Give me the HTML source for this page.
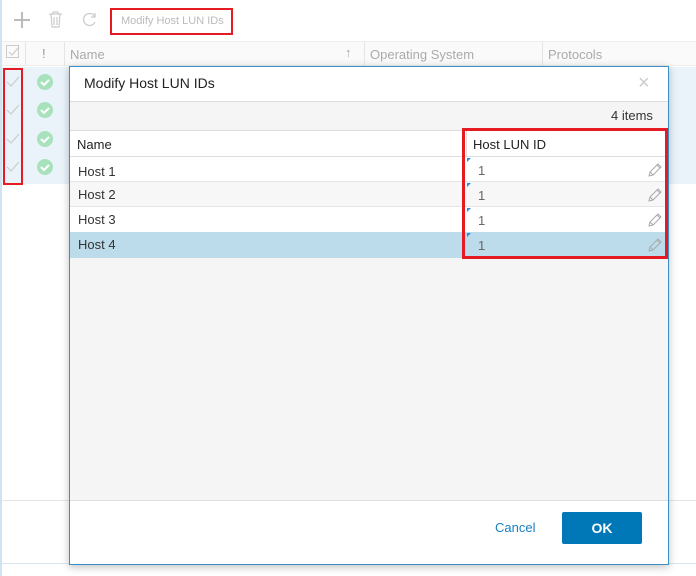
<!DOCTYPE html>
<html><head><style>
*{box-sizing:border-box;margin:0;padding:0}
body{width:696px;height:576px;position:relative;overflow:hidden;background:#fff;font-family:"Liberation Sans",Arial,sans-serif;font-size:13px;color:#333}
.a{position:absolute}
</style></head><body>
<div class="a" style="left:0;top:0;width:2px;height:576px;background:#cfe3f1"></div>
<!-- toolbar -->
<svg class="a" style="left:14px;top:12px" width="16" height="16"><path d="M8 0v16M0 8h16" stroke="#bbb" stroke-width="2"/></svg>
<svg class="a" style="left:48px;top:11px" width="15" height="17"><path d="M1 3h13M5 3V1h5v2M3 3l1 13h7l1-13M6 6v8M9 6v8" stroke="#ccc" fill="none" stroke-width="1.2"/></svg>
<svg class="a" style="left:82px;top:11px" width="16" height="16"><path d="M13 6A6 6 0 1 0 13 11M13 2v4h-4" stroke="#ccc" fill="none" stroke-width="1.3"/></svg>
<div class="a" style="left:110px;top:8px;width:123px;height:27px;border:2px solid #e51b24;color:#bbb;font-size:11px;line-height:22px;padding-left:9px">Modify Host LUN IDs</div>
<!-- bg table -->
<div class="a" style="left:2px;top:41px;width:694px;height:1px;background:#eee"></div>
<div class="a" style="left:2px;top:42px;width:694px;height:24px;background:#fafafa;border-bottom:1px solid #eee"></div>
<div class="a" style="left:25px;top:42px;width:1px;height:24px;background:#e5e5e5"></div>
<div class="a" style="left:64px;top:42px;width:1px;height:24px;background:#e5e5e5"></div>
<div class="a" style="left:364px;top:42px;width:1px;height:24px;background:#e5e5e5"></div>
<div class="a" style="left:542px;top:42px;width:1px;height:24px;background:#e5e5e5"></div>
<svg class="a" style="left:6px;top:45px" width="14" height="14"><rect x=".5" y=".5" width="12" height="12" fill="none" stroke="#ccc"/><path d="M3 7l3 3 7-8" stroke="#ccc" fill="none" stroke-width="1.2"/></svg>
<div class="a" style="left:42px;top:46px;color:#999;font-size:13px">!</div>
<div class="a" style="left:70px;top:47px;color:#aaa;font-size:13px">Name</div>
<div class="a" style="left:345px;top:45px;color:#aaa;font-size:13px">↑</div>
<div class="a" style="left:370px;top:47px;color:#aaa;font-size:13px">Operating System</div>
<div class="a" style="left:548px;top:47px;color:#aaa;font-size:13px">Protocols</div>
<div class="a" style="left:2px;top:67px;width:694px;height:117px;background:#eaf3fa"></div>
<svg class="a" style="left:6px;top:72px" width="50" height="110">
<g fill="#a8e2bd"><circle cx="39" cy="10" r="8"/><circle cx="39" cy="38" r="8"/><circle cx="39" cy="67" r="8"/><circle cx="39" cy="95" r="8"/></g>
<g stroke="#fff" stroke-width="2" fill="none"><path d="M35 10l3 3 5-5M35 38l3 3 5-5M35 67l3 3 5-5M35 95l3 3 5-5"/></g>
<g stroke="#ccc" stroke-width="1.2" fill="none"><path d="M1 10l4 4 8-9M1 38l4 4 8-9M1 67l4 4 8-9M1 95l4 4 8-9"/></g>
</svg>
<div class="a" style="left:3px;top:68px;width:20px;height:117px;border:2px solid #e51b24"></div>
<div class="a" style="left:2px;top:500px;width:694px;height:1px;background:#e5e5e5"></div>
<div class="a" style="left:2px;top:563px;width:694px;height:1px;background:#d5e6f2"></div>
<!-- dialog -->
<div class="a" style="left:69px;top:66px;width:600px;height:499px;border:1px solid #3b8fc6;background:#fff;box-shadow:0 2px 8px rgba(0,0,0,.25)"></div>
<div class="a" style="left:84px;top:75px;font-size:14px;color:#222">Modify Host LUN IDs</div>
<div class="a" style="left:638px;top:72px;font-size:20px;color:#ccc">×</div>
<div class="a" style="left:70px;top:101px;width:598px;height:400px;background:#f5f5f5;border-top:1px solid #ddd;border-bottom:1px solid #ddd"></div>
<div class="a" style="left:611px;top:108px;font-size:13px;color:#333">4 items</div>
<div class="a" style="left:70px;top:130px;width:598px;height:27px;background:#fff;border-top:1px solid #ddd;border-bottom:1px solid #ddd"></div>
<div class="a" style="left:466px;top:130px;width:1px;height:27px;background:#ddd"></div>
<div class="a" style="left:77px;top:137px;font-size:13px;color:#222">Name</div>
<div class="a" style="left:473px;top:137px;font-size:13px;color:#222">Host LUN ID</div>
<div class="a" style="left:70px;top:157px;width:598px;height:25px;background:#fff;border-bottom:1px solid #e5e5e5"></div>
<div class="a" style="left:70px;top:182px;width:598px;height:25px;background:#f7f7f7;border-bottom:1px solid #e5e5e5"></div>
<div class="a" style="left:70px;top:207px;width:598px;height:25px;background:#fff"></div>
<div class="a" style="left:70px;top:232px;width:598px;height:26px;background:#bcdcec"></div>
<div class="a" style="left:78px;top:164px;color:#333">Host 1</div>
<div class="a" style="left:78px;top:187px;color:#333">Host 2</div>
<div class="a" style="left:78px;top:212px;color:#333">Host 3</div>
<div class="a" style="left:78px;top:237px;color:#333">Host 4</div>
<div class="a" style="left:478px;top:163px;color:#666">1</div>
<div class="a" style="left:478px;top:188px;color:#666">1</div>
<div class="a" style="left:478px;top:213px;color:#666">1</div>
<div class="a" style="left:478px;top:238px;color:#666">1</div>
<svg class="a" style="left:467px;top:158px" width="5" height="100"><path d="M0 0h4L0 4zM0 25h4L0 29zM0 50h4L0 54zM0 75h4L0 79z" fill="#2a8fd8"/></svg>
<svg class="a" style="left:648px;top:163px" width="14" height="90" fill="none" stroke="#aaa" stroke-width="1"><path d="M1 13l1-4 8-8 3 3-8 8zM9 2l3 3M2 9l3 3"/><path transform="translate(0,25)" d="M1 13l1-4 8-8 3 3-8 8zM9 2l3 3M2 9l3 3"/><path transform="translate(0,50)" d="M1 13l1-4 8-8 3 3-8 8zM9 2l3 3M2 9l3 3"/><path transform="translate(0,75)" d="M1 13l1-4 8-8 3 3-8 8zM9 2l3 3M2 9l3 3"/></svg>
<div class="a" style="left:462px;top:128px;width:206px;height:131px;border:3px solid #e51b24"></div>
<div class="a" style="left:495px;top:520px;color:#1a7fc0;font-size:13px">Cancel</div>
<div class="a" style="left:562px;top:512px;width:80px;height:32px;background:#0078b8;border-radius:2px;color:#fff;font-weight:bold;font-size:14px;text-align:center;line-height:32px">OK</div>
</body></html>
